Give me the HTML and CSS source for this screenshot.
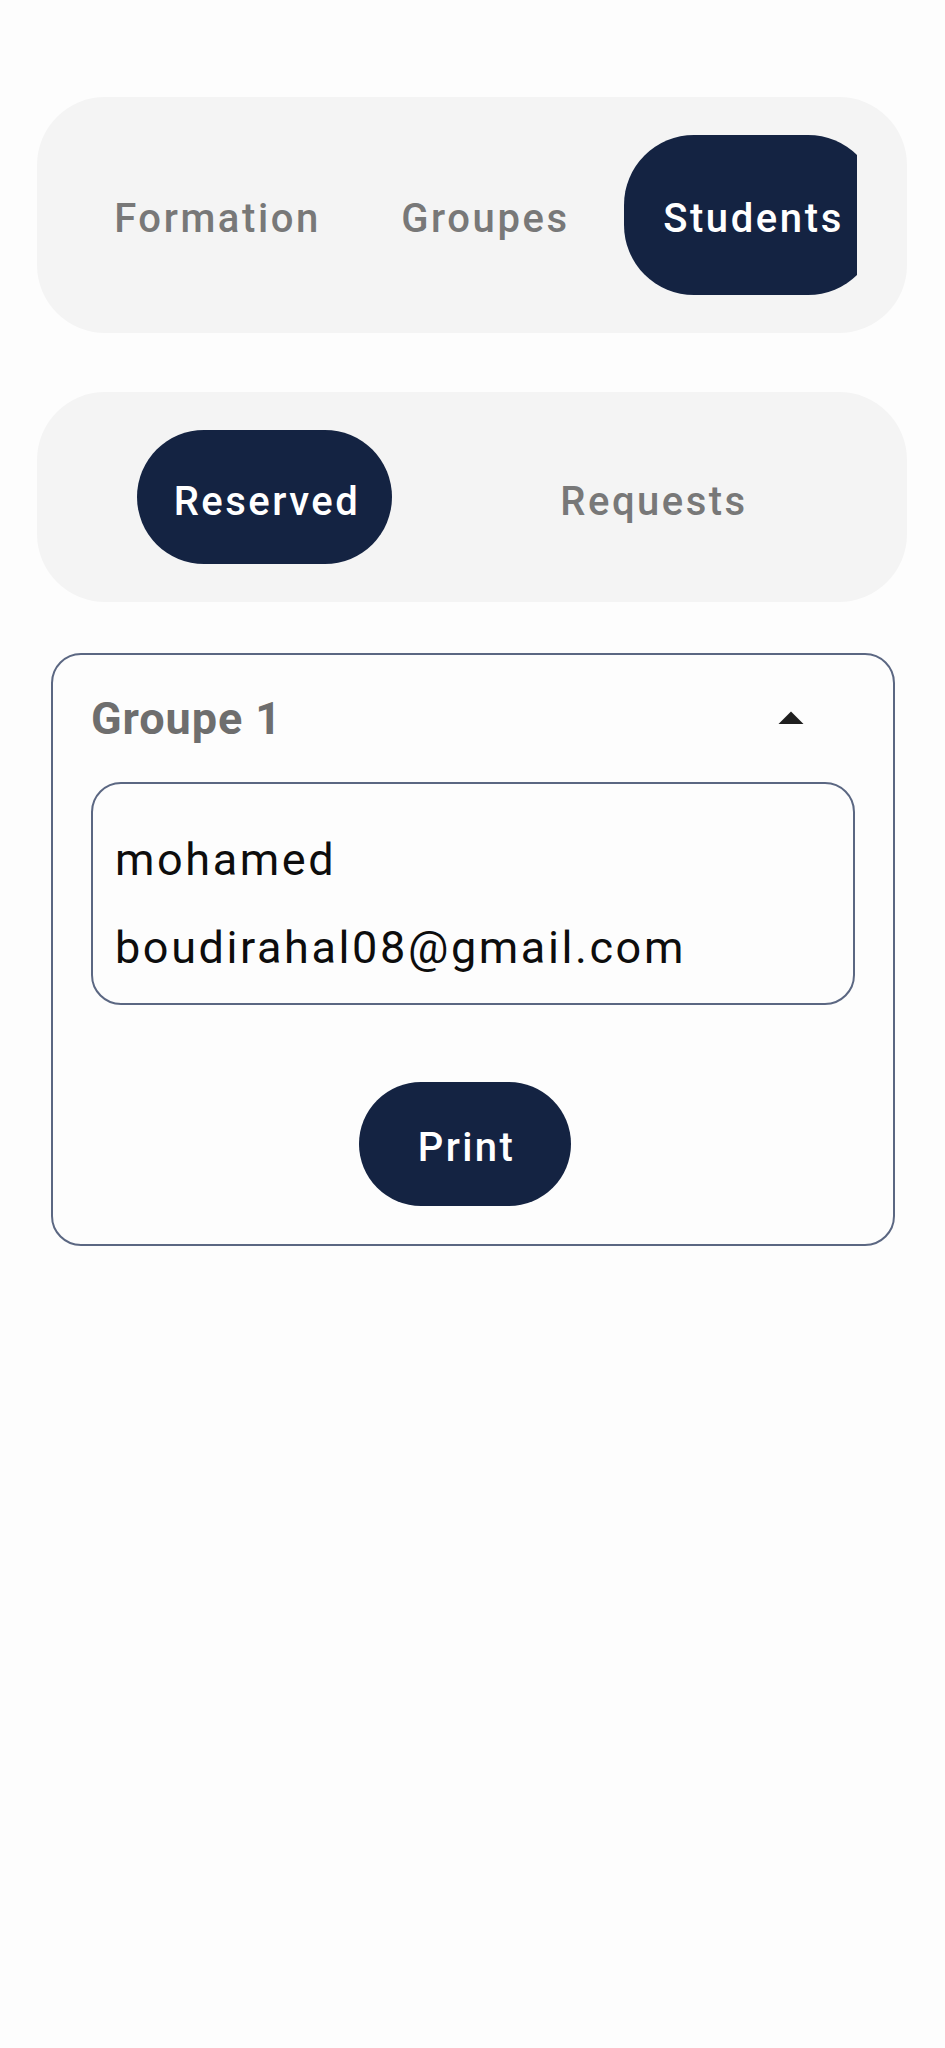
FILE: index.html
```html
<!DOCTYPE html>
<html lang="en">
<head>
<meta charset="utf-8">
<title>Students</title>
<link rel="stylesheet" href="styles.css">
</head>
<body>
<main class="page">
  <nav class="bar bar-main">
    <div class="tab-scroll">
      <div class="tab"><span class="tab-label">Formation</span></div>
      <div class="tab"><span class="tab-label">Groupes</span></div>
      <div class="tab"><span class="tab-label active">Students</span></div>
    </div>
  </nav>

  <nav class="bar bar-sub">
    <div class="seg"><span class="seg-label active">Reserved</span></div>
    <div class="seg"><span class="seg-label">Requests</span></div>
  </nav>

  <section class="group-card">
    <header class="group-head">
      <h2 class="group-title">Groupe 1</h2>
      <svg class="caret" viewBox="0 0 24 24" width="60" height="60" aria-hidden="true">
        <path d="M7 14l5-5 5 5z" fill="#1f1f1f"/>
      </svg>
    </header>
    <div class="student">
      <div class="student-line">mohamed</div>
      <div class="student-line">boudirahal08@gmail.com</div>
    </div>
    <div class="actions">
      <button class="print-btn">Print</button>
    </div>
  </section>
</main>
</body>
</html>
```

FILE: styles.css
```css
html, body {
  margin: 0;
  padding: 0;
  background: #fdfdfd;
}
body {
  font-family: Roboto, "Noto Sans", "Liberation Sans", sans-serif;
  width: 945px;
  min-height: 2048px;
}
.page {
  display: flex;
  flex-direction: column;
  padding-top: 97px;
}
.bar {
  box-sizing: border-box;
  width: 870px;
  margin-left: 37px;
  background: #f4f4f4;
  border-radius: 68px;
  display: flex;
  align-items: center;
}
.bar-main {
  height: 236px;
  padding: 0 50px 0 44px;
}
.tab-scroll {
  flex: 1;
  display: flex;
  overflow: hidden;
  height: 160px;
}
.tab {
  flex: 0 0 268px;
  box-sizing: border-box;
  padding: 0 7px;
  display: flex;
}
.tab-label {
  box-sizing: border-box;
  flex: 1;
  height: 160px;
  padding: 6px 0 0 5px;
  display: flex;
  align-items: center;
  justify-content: center;
  font-size: 40px;
  font-weight: 500;
  letter-spacing: 2.6px;
  color: #787878;
  border-radius: 70px;
}
.tab-label.active {
  background: #142342;
  color: #ffffff;
}
.bar-sub {
  margin-top: 59px;
  height: 210px;
  padding: 0 62px 0 34px;
}
.seg {
  flex: 1;
  display: flex;
  justify-content: center;
}
.seg-label {
  box-sizing: border-box;
  height: 134px;
  width: 255px;
  padding: 8px 0 0 5px;
  display: flex;
  align-items: center;
  justify-content: center;
  font-size: 40px;
  font-weight: 500;
  letter-spacing: 2.5px;
  color: #787878;
  border-radius: 67px;
}
.seg-label.active {
  background: #142342;
  color: #ffffff;
}
.group-card {
  box-sizing: border-box;
  margin: 51px 0 0 51px;
  width: 844px;
  border: 2px solid #5b6782;
  border-radius: 30px;
  padding: 38px;
  display: flex;
  flex-direction: column;
}
.group-head {
  display: flex;
  align-items: center;
  justify-content: space-between;
  height: 52px;
  padding-right: 34px;
}
.group-title {
  margin: 0;
  font-size: 45px;
  font-weight: 700;
  line-height: 52px;
  letter-spacing: 0.9px;
  color: #6e6e6e;
}
.caret {
  display: block;
  flex: 0 0 60px;
}
.student {
  margin-top: 37px;
  border: 2px solid #5b6782;
  border-radius: 30px;
  padding: 32px 22px 11px 22px;
}
.student-line {
  font-size: 45px;
  line-height: 88px;
  letter-spacing: 2.6px;
  color: #0d0d0d;
}
.actions {
  display: flex;
  justify-content: center;
  padding-right: 16px;
  margin-top: 77px;
}
.print-btn {
  width: 212px;
  height: 124px;
  border: none;
  border-radius: 62px;
  background: #142342;
  color: #ffffff;
  font-family: Roboto, "Noto Sans", "Liberation Sans", sans-serif;
  font-size: 40px;
  font-weight: 500;
  letter-spacing: 2.4px;
  padding: 6px 0 0 3px;
}
```
